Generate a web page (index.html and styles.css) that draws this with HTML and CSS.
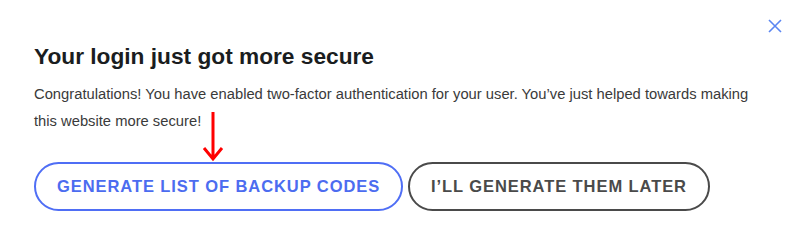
FILE: index.html
```html
<!DOCTYPE html>
<html lang="en">
<head>
<meta charset="utf-8">
<title>Two-factor enabled</title>
<link rel="stylesheet" href="styles.css">
</head>
<body>
<div class="modal">
  <button class="close" aria-label="Close">
    <svg width="14" height="14" viewBox="0 0 14 14"><path d="M1 1L13 13M13 1L1 13" stroke="#5b86f2" stroke-width="1.6" fill="none"/></svg>
  </button>
  <h2 class="title">Your login just got more secure</h2>
  <p class="text">Congratulations! You have enabled two-factor authentication for your user. You’ve just helped towards making this website more secure!</p>
  <div class="actions">
    <button class="btn btn-primary">Generate list of backup codes</button>
    <button class="btn btn-secondary">I’ll generate them later</button>
  </div>
  <svg class="arrow" width="24" height="50" viewBox="0 0 24 50"><path d="M12 0V47M3 36L12 47L21 36" stroke="#ff0000" stroke-width="3" fill="none"/></svg>
</div>
</body>
</html>
```

FILE: styles.css
```css
html, body {
  margin: 0;
  padding: 0;
  background: #ffffff;
}
body {
  font-family: "Liberation Sans", Arial, sans-serif;
}
.modal {
  position: relative;
  width: 800px;
  height: 252px;
  box-sizing: border-box;
  padding: 42px 34px 0 34px;
}
.close {
  position: absolute;
  top: 19px;
  right: 18px;
  background: none;
  border: 0;
  padding: 0;
  width: 14px;
  height: 14px;
  display: flex;
}
.title {
  margin: 0;
  font-size: 22.7px;
  line-height: 28px;
  font-weight: 700;
  color: #1a1d20;
}
.text {
  margin: 11px 0 0 0;
  font-size: 14.75px;
  line-height: 27px;
  color: #3a3a3a;
}
.actions {
  display: flex;
  gap: 5px;
  margin-top: 27px;
}
.btn {
  font-family: "Liberation Sans", Arial, sans-serif;
  font-weight: 700;
  font-size: 16.5px;
  letter-spacing: 0.92px;
  text-transform: uppercase;
  background: #fff;
  border-radius: 26px;
  height: 49px;
  padding: 0 21px;
  border: 2.5px solid;
}
.btn-primary {
  color: #4c6cf0;
  border-color: #4f6ef5;
}
.btn-secondary {
  color: #4a4a4a;
  border-color: #4a4a4a;
}
.arrow {
  position: absolute;
  left: 201px;
  top: 112px;
}
```
